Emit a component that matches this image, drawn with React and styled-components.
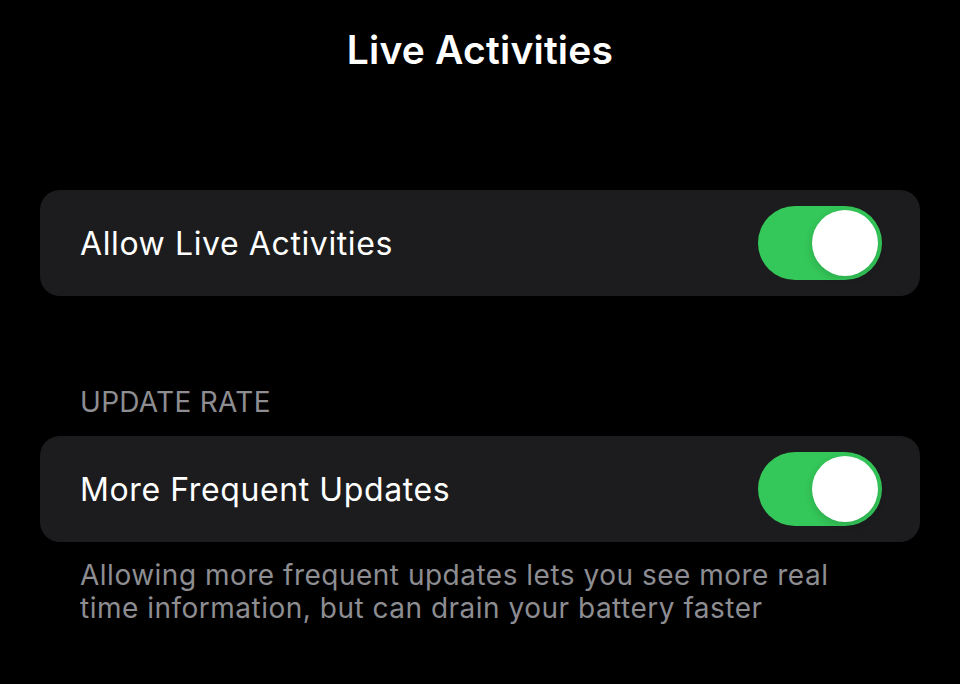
import styled, { createGlobalStyle } from "styled-components";

const GlobalStyle = createGlobalStyle`
  html, body {
    margin: 0;
    padding: 0;
    background: #000;
  }
  body {
    font-family: Inter, "Noto Sans", sans-serif;
    -webkit-font-smoothing: antialiased;
  }
`;

const Screen = styled.div`
  width: 960px;
  height: 684px;
  background: #000;
  color: #fff;
  padding: 0 40px;
  box-sizing: border-box;
  overflow: hidden;
`;

const Title = styled.h1`
  margin: 0;
  padding-top: 26px;
  height: 190px;
  box-sizing: border-box;
  text-align: center;
  font-size: 39px;
  font-weight: 600;
  letter-spacing: 0.2px;
  line-height: 48px;
`;

const Card = styled.div`
  display: flex;
  align-items: center;
  justify-content: space-between;
  height: 106px;
  padding: 0 38px 0 40px;
  box-sizing: border-box;
  background: #1c1c1e;
  border-radius: 20px;
`;

const Label = styled.span`
  font-size: 32px;
  font-weight: 400;
  letter-spacing: 0.6px;
`;

const SectionHeader = styled.div`
  margin-top: 90px;
  margin-bottom: 18px;
  padding-left: 40px;
  font-size: 28px;
  color: #8d8d92;
  line-height: 32px;
  letter-spacing: 0.3px;
`;

const Footer = styled.p`
  margin: 17px 0 0;
  padding-left: 40px;
  font-size: 28px;
  line-height: 33px;
  color: #8d8d92;
  letter-spacing: 0.5px;
`;

const Switch = styled.div`
  position: relative;
  width: 124px;
  height: 74px;
  border-radius: 37px;
  background: ${(p) => (p.$on ? "#34c759" : "#39393d")};
  flex-shrink: 0;
`;

const Knob = styled.div`
  position: absolute;
  top: 4px;
  left: ${(p) => (p.$on ? "54px" : "4px")};
  width: 66px;
  height: 66px;
  border-radius: 50%;
  background: #fff;
  box-shadow: 0 3px 8px rgba(0, 0, 0, 0.15);
`;

const Toggle = ({ on }) => (
  <Switch $on={on}>
    <Knob $on={on} />
  </Switch>
);

export default function App() {
  return (
    <Screen>
      <GlobalStyle />
      <Title>Live Activities</Title>
      <Card>
        <Label>Allow Live Activities</Label>
        <Toggle on />
      </Card>
      <SectionHeader>UPDATE RATE</SectionHeader>
      <Card>
        <Label>More Frequent Updates</Label>
        <Toggle on />
      </Card>
      <Footer>
        Allowing more frequent updates lets you see more real
        <br />
        time information, but can drain your battery faster
      </Footer>
    </Screen>
  );
}
